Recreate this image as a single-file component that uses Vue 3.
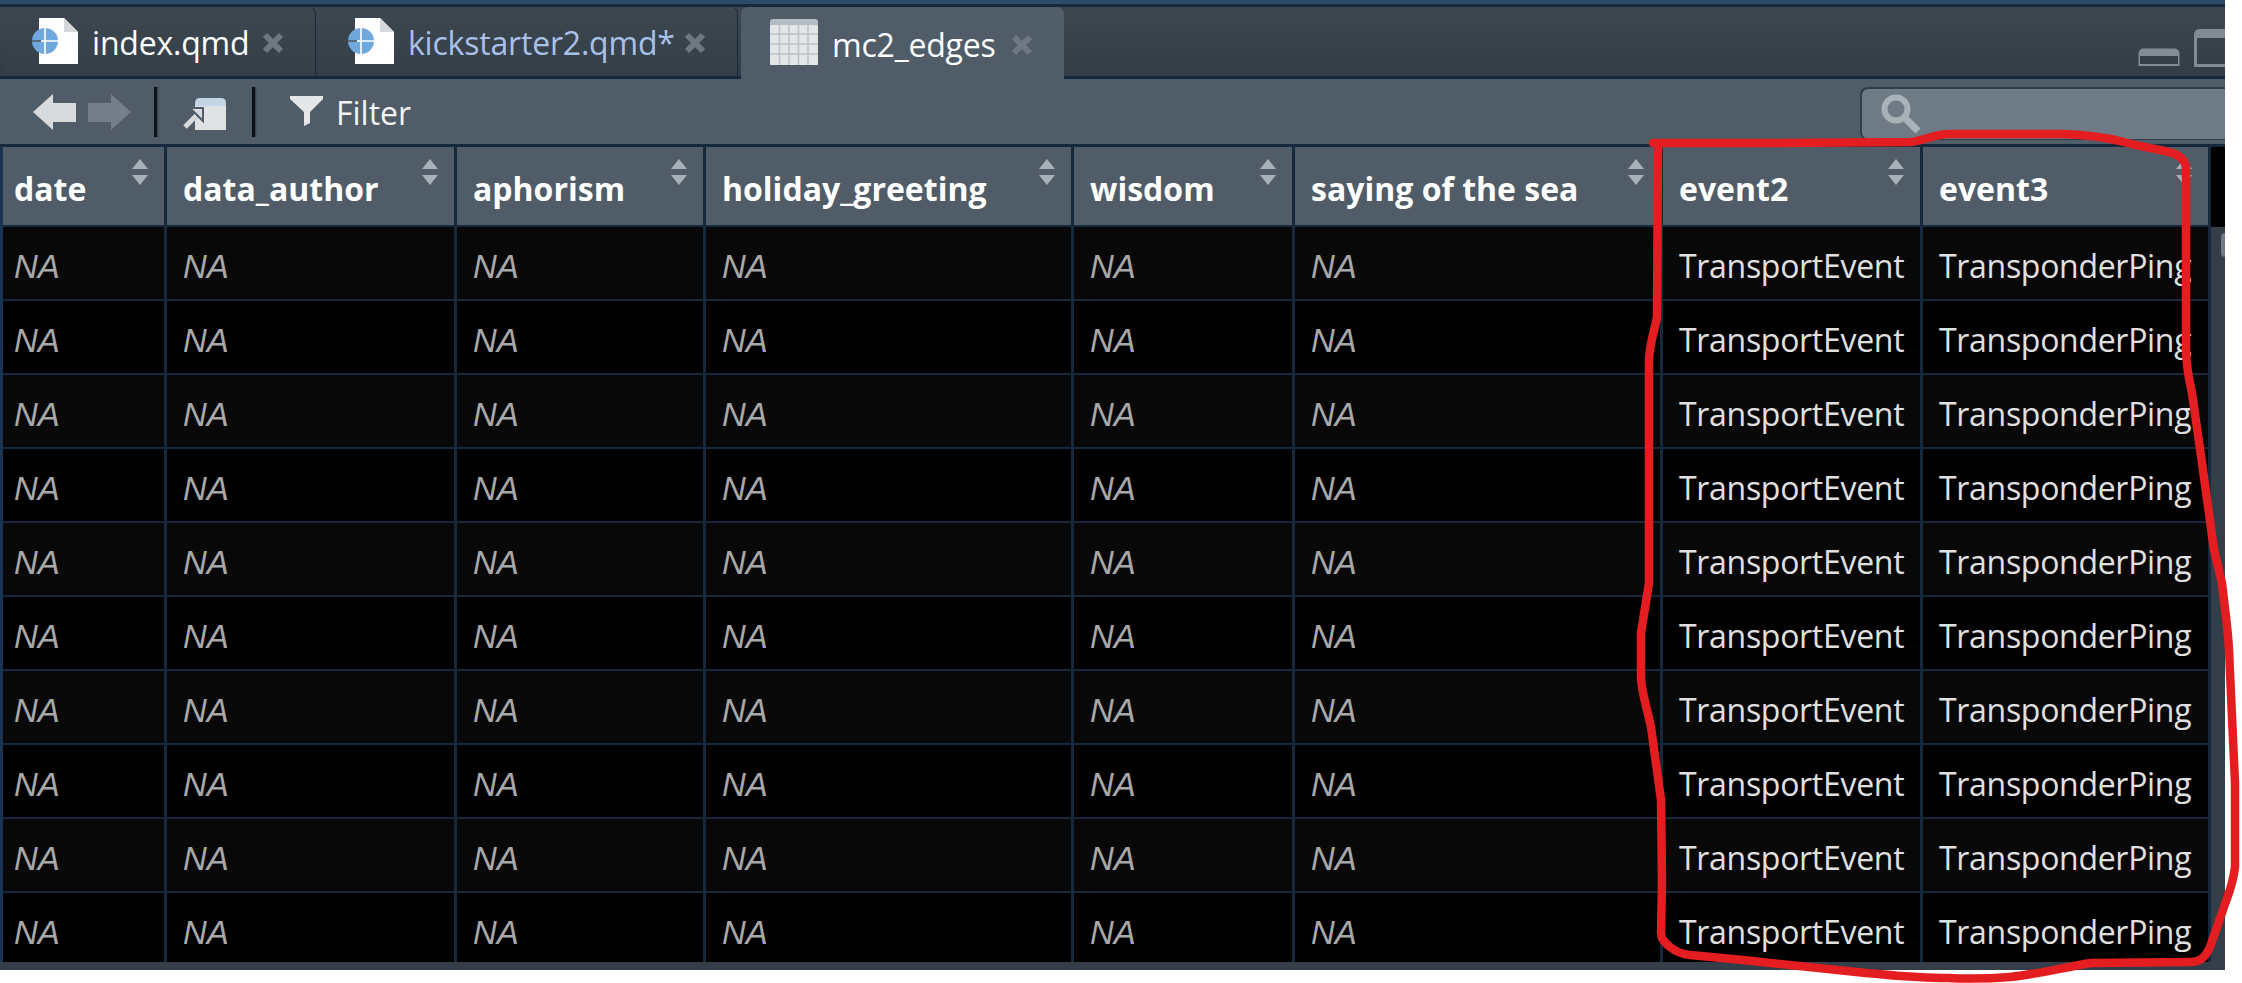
<script setup>
const tabs = [
  { name: 'index.qmd', width: 313, kind: 'doc', tone: 'plain' },
  { name: 'kickstarter2.qmd*', width: 419, kind: 'doc', tone: 'dirty' },
  { name: 'mc2_edges', width: 323, kind: 'table', tone: 'plain', active: true }
]
const columns = [
  { name: 'date', width: 164 },
  { name: 'data_author', width: 290 },
  { name: 'aphorism', width: 249 },
  { name: 'holiday_greeting', width: 368 },
  { name: 'wisdom', width: 221 },
  { name: 'saying of the sea', width: 368 },
  { name: 'event2', width: 260 },
  { name: 'event3', width: 288 }
]
const template = columns.map(c => c.width + 'px').join(' ')
const rows = Array.from({ length: 10 }, (_, i) => i)
const cells = ['NA', 'NA', 'NA', 'NA', 'NA', 'NA', 'TransportEvent', 'TransponderPing']
const red = 'M1653 143 L1780 143 L1911 142 C1925 140 1935 134 1950 134 L2063 134 C2090 135 2105 137 2124 142 C2145 148 2165 150 2175 154 C2183 158 2186 162 2186 170 L2186 253 L2186 353 C2187 370 2189 380 2192 393 L2202 463 L2214 550 L2222 583 C2225 610 2228 630 2229 650 L2235 783 L2235 867 C2233 885 2228 895 2224 907 L2210 947 C2205 958 2200 962 2190 962 L2091 963 C2060 968 2040 974 2010 977 C1985 979 1970 979 1948 978 C1915 978 1890 975 1866 973 L1743 960 L1690 955 C1680 954 1675 951 1670 947 C1663 941 1661 938 1661 933 L1662 883 L1661 800 L1651 727 C1645 700 1641 690 1641 677 L1641 633 L1649 583 L1649 420 L1649 360 C1650 340 1655 330 1657 317 L1658 143'
</script>

<template>
  <div class="shot">
    <div class="page">
      <div class="strip"></div>
      <div class="tabbar">
        <div
          v-for="t in tabs"
          :key="t.name"
          class="tab"
          :class="{ active: t.active }"
          :style="{ width: t.width + 'px' }"
        >
          <svg v-if="t.kind === 'doc'" class="tab-icon" viewBox="0 0 46 46" width="46" height="46">
            <path d="M7 0 H32 L46 14 V46 H7 Z" fill="#fff" />
            <path d="M32 0 L46 14 H32 Z" fill="#d5d8db" />
            <circle cx="13" cy="23" r="13" fill="#6fa8dc" />
            <path d="M0 23 H26 M13 10 V36" stroke="#fff" stroke-width="1.6" />
            <path d="M0 23 H9" stroke="#33495e" stroke-width="1.6" />
          </svg>
          <svg v-else class="tab-icon" viewBox="0 0 48 46" width="48" height="46">
            <path d="M3 0 H45 Q48 0 48 3 V6 H0 V3 Q0 0 3 0 Z" fill="#b3bcc4" />
            <rect x="0" y="6" width="48" height="40" rx="1" fill="#e3e5e7" />
            <path d="M9.5 6 V46 M19 6 V46 M28.5 6 V46 M38 6 V46 M0 15 H48 M0 25 H48 M0 35 H48" stroke="#bcc3c9" stroke-width="1.6" />
          </svg>
          <span class="tab-label" :class="t.tone">{{ t.name }}</span>
          <svg class="tab-close" viewBox="0 0 22 22" width="22" height="22">
            <path d="M3 3 L19 19 M19 3 L3 19" stroke="#6d7882" stroke-width="6" />
          </svg>
        </div>
        <div class="window-btns">
          <svg class="win-min" viewBox="0 0 44 20" width="44" height="20">
            <path d="M1.5 19 V7 Q1.5 1.5 7 1.5 H37 Q42.5 1.5 42.5 7 V19 Z M3 9 V17 H41 V9 Z" fill="#818c95" fill-rule="evenodd" />
          </svg>
          <svg class="win-max" viewBox="0 0 50 38" width="50" height="38">
            <path d="M0 38 V6 Q0 0 6 0 H50 V38 Z M3 9 V35 H50 V9 Z" fill="#818c95" fill-rule="evenodd" />
          </svg>
        </div>
      </div>

      <div class="toolbar">
        <svg class="tool-arrow" viewBox="0 0 43 36" width="43" height="36">
          <path d="M0 18 L20 0 V9 H43 V28 H20 V36 Z" fill="#d8dadc" />
        </svg>
        <svg class="tool-arrow next" viewBox="0 0 43 36" width="43" height="36">
          <path d="M43 18 L23 0 V9 H0 V28 H23 V36 Z" fill="#747f89" />
        </svg>
        <span class="sep first"></span>
        <svg class="tool-open" viewBox="0 0 46 32" width="46" height="32">
          <path d="M14 5 Q14 0 19 0 H40 Q45 0 45 5 V8 H14 Z" fill="#c3d4e4" />
          <rect x="14" y="8" width="31" height="24" fill="#dfe1e3" />
          <path d="M2 28 L17 13" stroke="#505d69" stroke-width="9" />
          <path d="M4 29 L16 17" stroke="#d8dadc" stroke-width="5" />
          <path d="M9 10 H22 V23 Z" fill="#d8dadc" stroke="#505d69" stroke-width="2" />
        </svg>
        <span class="sep second"></span>
        <svg class="tool-funnel" viewBox="0 0 33 30" width="33" height="30">
          <path d="M0 0 H33 V3 L20 16 V27 L14 30 V16 L0 3 Z" fill="#e4e6e8" />
        </svg>
        <span class="filter-label">Filter</span>
        <div class="search">
          <svg viewBox="0 0 40 40" width="40" height="40">
            <circle cx="15" cy="15" r="11.5" fill="none" stroke="#aab2b9" stroke-width="6" />
            <path d="M23 23 L37 37" stroke="#aab2b9" stroke-width="7" />
          </svg>
        </div>
      </div>

      <div class="grid-wrap">
        <div class="grid">
          <div class="row head" :style="{ gridTemplateColumns: template }">
            <div v-for="c in columns" :key="c.name" class="th">
              <span>{{ c.name }}</span>
              <i class="sort"><b class="up"></b><b class="down"></b></i>
            </div>
          </div>
          <div
            v-for="r in rows"
            :key="r"
            class="row body"
            :class="{ odd: r % 2 === 0 }"
            :style="{ gridTemplateColumns: template }"
          >
            <div
              v-for="(val, idx) in cells"
              :key="idx"
              class="td"
              :class="{ na: val === 'NA' }"
            >{{ val }}</div>
          </div>
        </div>
        <div class="scroll-col">
          <div class="scroll-head"></div>
          <div class="scroll-thumb"></div>
        </div>
      </div>
    </div>

    <svg class="annotation" viewBox="0 0 2242 983" width="2242" height="983">
      <path :d="red" fill="none" stroke="#e41e20" stroke-width="8.5" stroke-linecap="round" stroke-linejoin="round" />
    </svg>
  </div>
</template>

<style scoped>
.shot {
  position: relative;
  width: 2242px;
  height: 983px;
  overflow: hidden;
  background: #fff;
  font-family: "Open Sans", "Noto Sans", sans-serif;
}
.page {
  width: 2225px;
  height: 970px;
  display: flex;
  flex-direction: column;
  overflow: hidden;
  background: #333e48;
}
.strip {
  height: 4px;
  flex: none;
  background: #2d4a68;
  border-bottom: 3px solid #16293c;
}
.tabbar {
  height: 69px;
  flex: none;
  display: flex;
  gap: 3px;
  padding-left: 3px;
  background: linear-gradient(#3c4750, #323d47);
  border-bottom: 3px solid #16293c;
}
.tab {
  box-sizing: border-box;
  display: flex;
  align-items: center;
  flex: none;
  padding: 0 31px 0 29px;
  background: linear-gradient(#3c4750, #343f49);
  border-radius: 7px 7px 0 0;
  border-right: 1px solid #16293c;
}
.tab.active {
  height: 72px;
  margin-bottom: -3px;
  background: #505d69;
  border-right: none;
}
.tab-icon {
  flex: none;
  margin-top: -2px;
}
.tab-label {
  flex: 1;
  margin-left: 14px;
  padding-top: 3px;
  font-size: 32px;
  line-height: 40px;
  letter-spacing: -0.2px;
  white-space: nowrap;
  color: #fff;
}
.tab-label.dirty {
  color: #a9c1e8;
}
.tab-close {
  flex: none;
  margin-top: 3px;
}
.window-btns {
  margin-left: auto;
  display: flex;
  align-items: flex-end;
  gap: 13px;
  padding-bottom: 9px;
  margin-right: -19px;
}
.toolbar {
  box-sizing: border-box;
  height: 68px;
  flex: none;
  display: flex;
  align-items: center;
  padding-left: 33px;
  background: #505d69;
  border-bottom: 3px solid #16293c;
}
.tool-arrow.next {
  margin-left: 12px;
}
.sep {
  width: 3px;
  height: 50px;
  margin-top: 0;
  background: #0e1218;
  box-shadow: 1px 0 2px rgba(0, 0, 0, 0.35);
}
.sep.first {
  margin-left: 23px;
}
.tool-open {
  margin-left: 24px;
  margin-top: 4px;
}
.sep.second {
  margin-left: 25px;
}
.tool-funnel {
  margin-left: 35px;
  margin-top: -2px;
}
.filter-label {
  margin-left: 13px;
  padding-top: 2px;
  font-size: 32px;
  color: #f2f3f4;
}
.search {
  box-sizing: border-box;
  margin-left: auto;
  align-self: flex-start;
  margin-top: 8px;
  width: 365px;
  height: 53px;
  display: flex;
  align-items: center;
  padding-left: 19px;
  background: #6e7a85;
  border: 2px solid #2f3e4c;
  border-right: none;
  border-bottom-width: 1px;
  border-radius: 8px 0 0 8px;
}
.grid-wrap {
  flex: 1;
  min-height: 0;
  display: flex;
  padding-bottom: 8px;
  box-sizing: border-box;
}
.grid {
  width: 2211px;
  flex: none;
  border-left: 3px solid #1a3350;
  box-sizing: border-box;
  overflow: hidden;
}
.row {
  display: grid;
}
.head {
  height: 80px;
}
.th {
  position: relative;
  box-sizing: border-box;
  height: 80px;
  padding: 21px 0 0 11px;
  background: #505d69;
  border-right: 3px solid #16293c;
  border-bottom: 2px solid #16293c;
  font-size: 32px;
  font-weight: 700;
  line-height: 42px;
  color: #fff;
  white-space: nowrap;
}
.th:nth-child(n + 2) {
  padding-left: 16px;
}
.sort {
  position: absolute;
  right: 16px;
  top: 12px;
  display: flex;
  flex-direction: column;
  gap: 6px;
}
.sort b {
  display: block;
  width: 0;
  height: 0;
  border-left: 8px solid transparent;
  border-right: 8px solid transparent;
}
.sort .up {
  border-bottom: 10px solid #a9b1b8;
}
.sort .down {
  border-top: 10px solid #a9b1b8;
}
.body {
  height: 74px;
  background: #000;
}
.body.odd {
  background: #080808;
}
.td {
  box-sizing: border-box;
  height: 74px;
  padding: 19px 0 0 16px;
  border-right: 3px solid #16293c;
  border-bottom: 2px solid #16293c;
  font-size: 32px;
  line-height: 40px;
  letter-spacing: -0.3px;
  color: #e0e0e0;
  white-space: nowrap;
  overflow: hidden;
}
.td:first-child {
  padding-left: 11px;
}
.td.na {
  padding-top: 20px;
  font-family: "Liberation Sans", Arial, sans-serif;
  font-size: 33px;
  font-style: italic;
  letter-spacing: 0;
  color: #a8a8a8;
}
.scroll-col {
  flex: 1;
  display: flex;
  flex-direction: column;
  align-items: flex-end;
}
.scroll-head {
  width: 100%;
  height: 80px;
  background: #000;
}
.scroll-thumb {
  width: 4px;
  height: 24px;
  margin-top: 6px;
  background: #6f7a85;
  border-radius: 4px 0 0 4px;
}
.annotation {
  position: absolute;
  left: 0;
  top: 0;
  pointer-events: none;
}
</style>
